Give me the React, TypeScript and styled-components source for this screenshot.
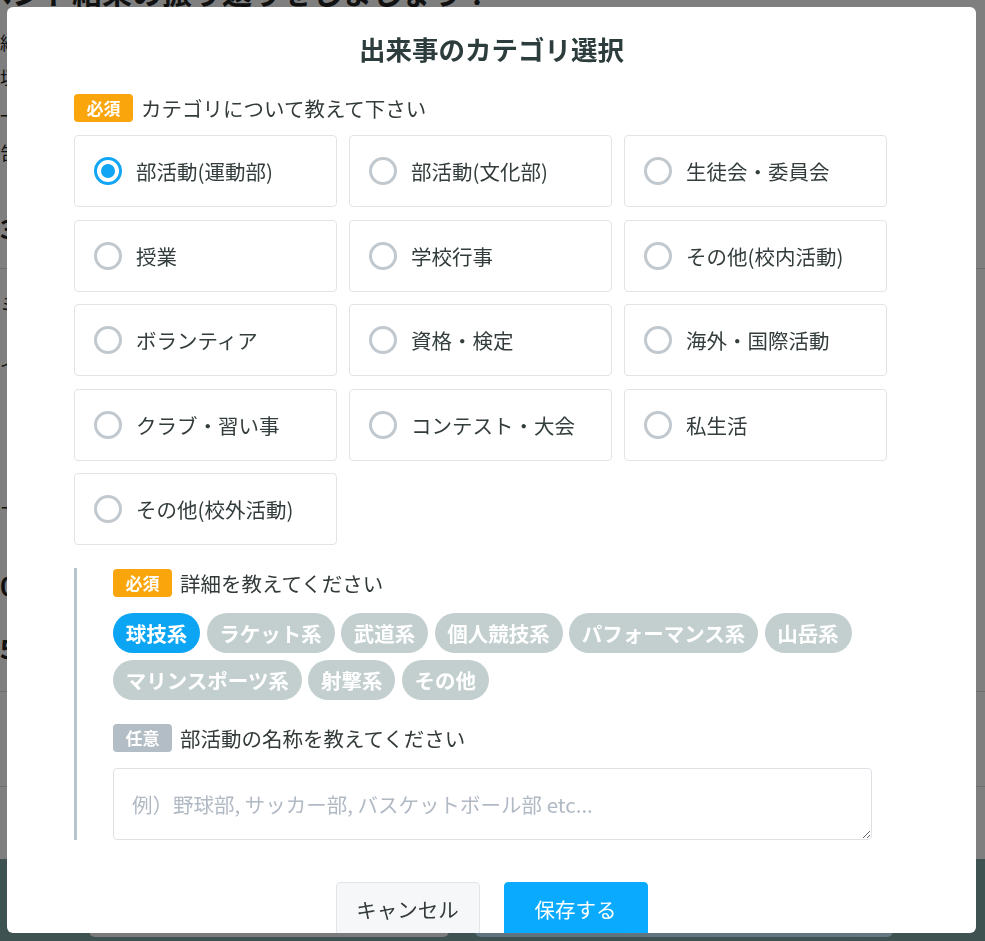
import React, { useState } from "react";
import styled, { createGlobalStyle } from "styled-components";

const GlobalStyle = createGlobalStyle`
  html, body { margin: 0; padding: 0; }
  body {
    font-family: "Noto Sans CJK JP", "Noto Sans", sans-serif;
    background: #ffffff;
    overflow: hidden;
  }
  * { box-sizing: border-box; }
`;

/* ---------- background page ---------- */
const Page = styled.div`
  width: 1010px;
  height: 941px;
  margin: 0 auto;
  overflow: hidden;
  color: #222;
`;

const PageHeading = styled.h1`
  margin: -27px 0 0 -48px;
  font-size: 30px;
  font-weight: 700;
  white-space: nowrap;
  line-height: 1.2;
`;

const PageLine = styled.p<{ $gap: number; $bold?: boolean }>`
  margin: ${(p) => p.$gap}px 0 0 0;
  font-size: ${(p) => (p.$bold ? 26 : 18)}px;
  font-weight: ${(p) => (p.$bold ? 700 : 400)};
  line-height: 1.3;
  white-space: nowrap;
`;

const PageDivider = styled.hr<{ $gap: number }>`
  margin: ${(p) => p.$gap}px 0 0 0;
  border: none;
  border-top: 1px solid #ddd;
`;

const PageFooter = styled.footer`
  position: fixed;
  left: 0;
  right: 0;
  bottom: 0;
  height: 82px;
  background: #7fa4a4;
  display: flex;
  align-items: flex-start;
  padding: 18px 0 0 89px;
  gap: 26px;
`;

const FooterButton = styled.div<{ $primary?: boolean }>`
  width: ${(p) => (p.$primary ? 418 : 360)}px;
  height: 60px;
  border-radius: 6px;
  background: ${(p) => (p.$primary ? "linear-gradient(90deg,#bde9ff,#c8f0ff)" : "#f7f7f7")};
  color: #111;
  font-size: 22px;
  font-weight: 700;
  display: flex;
  align-items: center;
  justify-content: center;
`;

/* ---------- modal ---------- */
const Overlay = styled.div`
  position: fixed;
  inset: 0;
  background: rgba(0, 0, 0, 0.5);
  padding: 7px;
`;

const Modal = styled.div`
  width: 969px;
  height: 926px;
  background: #ffffff;
  border-radius: 6px;
  overflow: hidden;
  padding-top: 22px;
`;

const Title = styled.h2`
  margin: 0;
  text-align: center;
  font-size: 26.5px;
  line-height: 39px;
  font-weight: 700;
  color: #2d3c3c;
`;

const Body = styled.div`
  padding: 26px 67px 0;
`;

const LabelRow = styled.div<{ $mb: number }>`
  display: flex;
  align-items: center;
  gap: 8px;
  height: 28px;
  margin-bottom: ${(p) => p.$mb}px;
`;

const Badge = styled.span<{ $optional?: boolean }>`
  display: inline-flex;
  align-items: center;
  justify-content: center;
  width: 59px;
  height: 28px;
  border-radius: 4px;
  background: ${(p) => (p.$optional ? "#b2bdc5" : "#faa50c")};
  color: #fff;
  font-size: 17px;
  line-height: 28px;
  font-weight: 700;
`;

const LabelText = styled.span`
  font-size: 20.5px;
  line-height: 28px;
  color: #333a3a;
`;

const CategoryGrid = styled.div`
  display: grid;
  grid-template-columns: repeat(3, 263px);
  grid-auto-rows: 72px;
  column-gap: 12px;
  row-gap: 12.5px;
`;

const Card = styled.label`
  display: flex;
  align-items: center;
  gap: 14px;
  padding-left: 19px;
  border: 1px solid #e1e4e7;
  border-radius: 4px;
  cursor: pointer;
  background: #fff;
`;

const Radio = styled.span<{ $checked: boolean }>`
  width: 28px;
  height: 28px;
  border-radius: 50%;
  border: 3px solid ${(p) => (p.$checked ? "#10a5f5" : "#c1c8ce")};
  display: flex;
  align-items: center;
  justify-content: center;
  flex-shrink: 0;
  &::after {
    content: "";
    width: 14px;
    height: 14px;
    border-radius: 50%;
    background: ${(p) => (p.$checked ? "#10a5f5" : "transparent")};
  }
`;

const CardText = styled.span`
  font-size: 20.5px;
  color: #343d3d;
`;

const Detail = styled.section`
  margin-top: 23px;
  border-left: 3px solid #b9c5cd;
  padding: 1px 37px 0 36px;
`;

const ChipWrap = styled.div`
  display: flex;
  flex-wrap: wrap;
  column-gap: 6.5px;
  row-gap: 7px;
  margin-bottom: 24px;
`;

const Chip = styled.button<{ $active: boolean }>`
  height: 40px;
  padding: 0 12.75px;
  border: none;
  border-radius: 20px;
  background: ${(p) => (p.$active ? "#0ba5f4" : "#c3cfcf")};
  color: #fff;
  font-family: inherit;
  font-size: 20.5px;
  font-weight: 700;
  line-height: 40px;
  cursor: pointer;
`;

const TextArea = styled.textarea`
  display: block;
  width: 100%;
  height: 72px;
  border: 1px solid #dde1e5;
  border-radius: 4px;
  padding: 20px 18px;
  font-family: inherit;
  font-size: 20.5px;
  line-height: 30px;
  color: #333;
  resize: vertical;
  &::placeholder {
    color: #b1bac4;
  }
`;

const Actions = styled.div`
  display: flex;
  justify-content: center;
  gap: 24px;
  margin-top: 42px;
`;

const ActionButton = styled.button<{ $primary?: boolean }>`
  width: 144px;
  height: 58px;
  border-radius: 4px;
  border: 1px solid ${(p) => (p.$primary ? "#0aabff" : "#e3e6e9")};
  background: ${(p) => (p.$primary ? "#0aabff" : "#f6f7f8")};
  color: ${(p) => (p.$primary ? "#fff" : "#333a3a")};
  font-family: inherit;
  font-size: 20.5px;
  padding: 0;
  padding-bottom: 4px;
  cursor: pointer;
`;

const categories = [
  "部活動(運動部)",
  "部活動(文化部)",
  "生徒会・委員会",
  "授業",
  "学校行事",
  "その他(校内活動)",
  "ボランティア",
  "資格・検定",
  "海外・国際活動",
  "クラブ・習い事",
  "コンテスト・大会",
  "私生活",
  "その他(校外活動)",
];

const details = [
  "球技系",
  "ラケット系",
  "武道系",
  "個人競技系",
  "パフォーマンス系",
  "山岳系",
  "マリンスポーツ系",
  "射撃系",
  "その他",
];

export default function App() {
  const [category, setCategory] = useState(0);
  const [detail, setDetail] = useState(0);

  return (
    <>
      <GlobalStyle />
      <Page>
        <PageHeading>イベント結果の振り返りをしましょう！</PageHeading>
        <PageLine $gap={22}>紹介文を入力してください</PageLine>
        <PageLine $gap={12}>垣根を越えた活動</PageLine>
        <PageLine $gap={14}>一緒に取り組んだ</PageLine>
        <PageLine $gap={14}>告知の内容</PageLine>
        <PageLine $gap={46} $bold>3</PageLine>
        <PageDivider $gap={24} />
        <PageLine $gap={24}>ミーティング</PageLine>
        <PageLine $gap={36}>イベント</PageLine>
        <PageLine $gap={120}>ー</PageLine>
        <PageLine $gap={48} $bold>0</PageLine>
        <PageLine $gap={30} $bold>5</PageLine>
        <PageDivider $gap={26} />
        <PageDivider $gap={94} />
      </Page>
      <PageFooter>
        <FooterButton>保存して下書きする</FooterButton>
        <FooterButton $primary>次へ進む</FooterButton>
      </PageFooter>

      <Overlay>
        <Modal>
          <Title>出来事のカテゴリ選択</Title>
          <Body>
            <LabelRow $mb={13}>
              <Badge>必須</Badge>
              <LabelText>カテゴリについて教えて下さい</LabelText>
            </LabelRow>
            <CategoryGrid>
              {categories.map((c, i) => (
                <Card key={c} onClick={() => setCategory(i)}>
                  <Radio $checked={category === i} />
                  <CardText>{c}</CardText>
                </Card>
              ))}
            </CategoryGrid>

            <Detail>
              <LabelRow $mb={16}>
                <Badge>必須</Badge>
                <LabelText>詳細を教えてください</LabelText>
              </LabelRow>
              <ChipWrap>
                {details.map((d, i) => (
                  <Chip key={d} $active={detail === i} onClick={() => setDetail(i)}>
                    {d}
                  </Chip>
                ))}
              </ChipWrap>
              <LabelRow $mb={16}>
                <Badge $optional>任意</Badge>
                <LabelText>部活動の名称を教えてください</LabelText>
              </LabelRow>
              <TextArea placeholder="例）野球部, サッカー部, バスケットボール部 etc..." />
            </Detail>
          </Body>
          <Actions>
            <ActionButton>キャンセル</ActionButton>
            <ActionButton $primary>保存する</ActionButton>
          </Actions>
        </Modal>
      </Overlay>
    </>
  );
}
